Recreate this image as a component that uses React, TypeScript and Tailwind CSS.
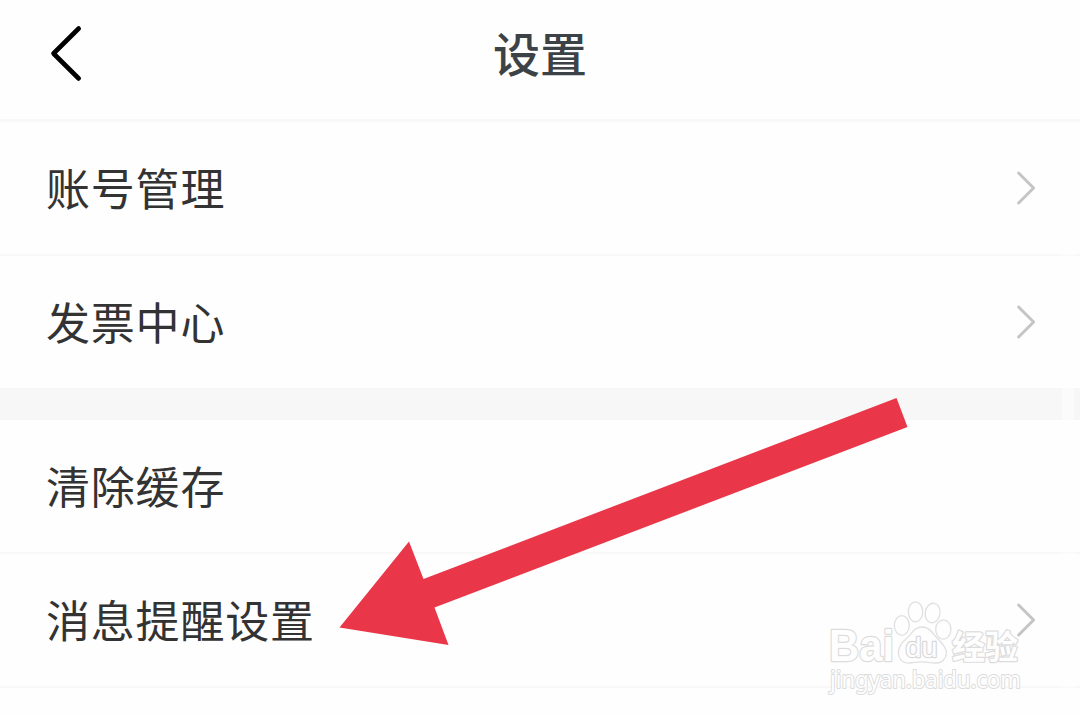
import React from 'react';

const ChevronRight: React.FC = () => (
  <svg width="24" height="40" viewBox="0 0 24 40" fill="none" className="shrink-0">
    <path d="M4.600 5 L19.600 20 L4.600 35" stroke="#c5c5c8" strokeWidth="3" strokeLinecap="round" strokeLinejoin="round" />
  </svg>
);

const Row: React.FC<{ label: string; arrow?: boolean; last?: boolean }> = ({ label, arrow = true, last }) => (
  <div className={`flex items-center justify-between pl-[46px] pr-[42px] ${last ? 'h-[132px]' : 'h-[134px] border-b-2 border-[#f8f8f8]'}`}>
    <span className="text-[44px] tracking-[0.8px] leading-none pb-[2px] text-[#333333]">{label}</span>
    {arrow && <ChevronRight />}
  </div>
);

const Watermark: React.FC = () => (
  <svg width="220" height="123" viewBox="815 594 220 123" className="absolute left-[815px] top-[594px]">
    <g fill="#fefefe" stroke="#e0e0e0" strokeWidth="1.300">
      <ellipse cx="901.800" cy="625.500" rx="7.500" ry="9.800" />
      <ellipse cx="915.500" cy="611.800" rx="7.200" ry="10" />
      <ellipse cx="932.600" cy="613" rx="7.400" ry="9.800" transform="rotate(10 932.6 613)" />
      <ellipse cx="943.300" cy="629.500" rx="7.600" ry="9.600" />
      <path d="M922 627 C914 627 912 634 906 639 C900 644 898 649 898.500 654 C899.500 661 904 663.500 910 663 C915 662.500 918 661.800 922 661.800 C926 661.800 930 663 936 663 C942 663 946 659 946.500 653 C946.500 648 943 644 938 639 C932 633 930 627 922 627 Z" />
    </g>
    <g fill="#fefefe" stroke="#dcdcdc" strokeWidth="2.400" strokeLinejoin="round" paintOrder="stroke">
      <text x="829" y="661" fontSize="44" fontWeight="700" fontFamily="'Liberation Sans', sans-serif" textLength="65" lengthAdjust="spacingAndGlyphs">Bai</text>
      <text x="905.500" y="656.500" fontSize="27" fontWeight="400" strokeWidth="2.400" stroke="#d8d8d8" fontFamily="'Liberation Sans', sans-serif" textLength="32" lengthAdjust="spacingAndGlyphs">du</text>
      <text x="952" y="658.500" fontSize="33" fontWeight="700" fontFamily="'Noto Sans CJK SC', sans-serif" textLength="66" lengthAdjust="spacingAndGlyphs">经验</text>
      <text x="830" y="687.500" fontSize="23.500" strokeWidth="2" fontFamily="'Noto Sans', sans-serif" textLength="191" lengthAdjust="spacingAndGlyphs">jingyan.baidu.com</text>
    </g>
  </svg>
);

export default function App() {
  return (
    <div className="relative h-[717px] w-[1080px] overflow-hidden bg-[#fefefe] font-['Noto_Sans_CJK_SC',sans-serif]">
      <header className="grid h-[122px] grid-cols-3 items-start border-b-[3px] border-[#f8f8f8]">
        <svg width="44" height="64" viewBox="0 0 44 64" fill="none" className="ml-11 mt-[22px]">
          <path d="M34.700 6.500 L9.500 31.500 L34.700 56.500" stroke="#000000" strokeWidth="4.600" strokeLinecap="round" strokeLinejoin="round" />
        </svg>
        <h1 className="mt-[28px] text-center text-[47px] font-medium leading-none text-[#3c4245]">设置</h1>
      </header>

      <main>
        <Row label="账号管理" />
        <Row label="发票中心" last />
        <div className="h-8 bg-[#f7f7f7]" />
        <Row label="清除缓存" arrow={false} />
        <Row label="消息提醒设置" />
      </main>

      {/* scroll track */}
      <div className="absolute left-[1062px] top-[122px] h-[595px] w-3 bg-[#fefefe]/60" />

      <svg width="580" height="256" viewBox="334 394 580 256" className="absolute left-[334px] top-[394px]">
        <path d="M339.500 627.500 L409 541.500 L423.500 579 L896.500 398 L907.500 427 L434.500 607.500 L448.500 645 Z" fill="#e93648" />
      </svg>

      <Watermark />
    </div>
  );
}
